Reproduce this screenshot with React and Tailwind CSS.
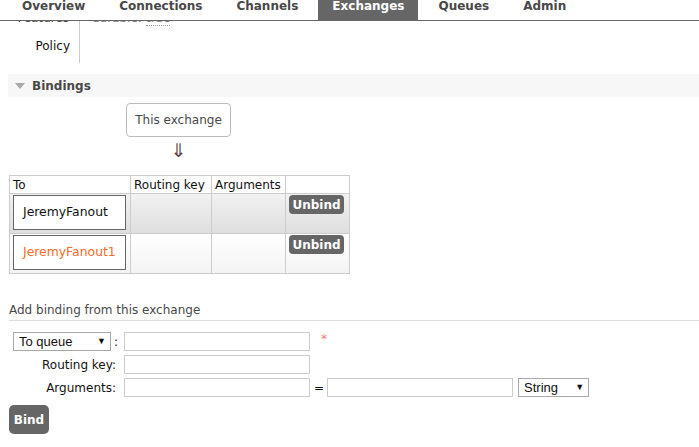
const TABS = ["Overview", "Connections", "Channels", "Exchanges", "Queues", "Admin"];

const BINDINGS = [
  { to: "JeremyFanout", row: "bg-gradient-to-b from-[#f2f2f2] to-[#dedede]", text: "text-[#111]" },
  { to: "JeremyFanout1", row: "bg-gradient-to-b from-white to-[#f3f3f3]", text: "text-[#f86b2a]" },
];

function FakeSelect({ label, className }) {
  return (
    <div
      className={`h-[19px] flex items-center justify-between border border-[#a9a9a9] bg-white pl-[5px] pr-[4px] font-['Liberation_Sans',Arial,sans-serif] text-[13px] text-[#111] ${className}`}
    >
      <span>{label}</span>
      <span className="text-[9px] leading-none text-[#111]">▼</span>
    </div>
  );
}

function Field({ className = "w-[186px]" }) {
  return <div className={`h-[19px] border border-[#ccc] bg-white ${className}`} />;
}

export default function App() {
  return (
    <div className="w-[699px] h-[447px] overflow-hidden bg-white font-['DejaVu_Sans',Verdana,sans-serif] text-[12px] text-[#484848]">
      {/* Top tabs, scrolled so the text is clipped */}
      <header className="h-[21px] border-b border-[#666] flex items-start gap-[6px] pl-[8px] overflow-hidden">
        {TABS.map((t) => (
          <div
            key={t}
            className={`px-[14px] font-bold text-[12px] leading-[14px] ${
              t === "Exchanges" ? "bg-[#666] text-white h-[20px]" : "text-[#484848] h-[20px]"
            }`}
          >
            <div className="-mt-[1px]">{t}</div>
          </div>
        ))}
      </header>

      {/* Exchange details, partly scrolled out of view */}
      <div className="h-[42px] overflow-hidden">
        <div className="-mt-[17px] grid grid-cols-[80px_1fr]">
          <div className="h-[28px] leading-[28px] text-right pr-[10px] border-r border-[#ccc]">Features</div>
          <div className="h-[28px] leading-[28px] pl-[12px] text-[#777]">
            durable: <span className="border-b border-dotted border-[#999]">true</span>
          </div>
          <div className="h-[31px] leading-[28px] text-right pr-[9px] border-r border-[#ccc] text-[#111]">Policy</div>
          <div className="h-[31px]" />
        </div>
      </div>

      {/* Bindings section */}
      <div className="ml-[8px] mt-[11px] h-[23px] bg-[#f7f7f7] flex items-center pl-[7px]">
        <span className="w-0 h-0 border-l-[5px] border-r-[5px] border-t-[6px] border-l-transparent border-r-transparent border-t-[#aaa]" />
        <span className="ml-[7px] font-bold text-[12px] text-[#484848]">Bindings</span>
      </div>

      <div className="pl-[9px]">
        <div className="ml-[117px] mt-[6px] w-[105px] h-[34px] border border-[#bbb] rounded-[4px] flex items-center justify-center text-[#484848]">
          This exchange
        </div>
        <div className="ml-[117px] w-[105px] text-center text-[19px] leading-[20px] mt-[3px] text-[#5a4040]">⇓</div>

        <table className="mt-[15px] border-collapse text-[#111]">
          <thead>
            <tr className="h-[18px]">
              <th className="w-[121px] border border-[#ccc] font-normal text-left px-[3px] py-0 leading-[16px]">To</th>
              <th className="w-[81px] border border-[#ccc] font-normal text-left px-[3px] leading-[16px]">Routing key</th>
              <th className="w-[74px] border border-[#ccc] font-normal text-left px-[3px] leading-[16px]">Arguments</th>
              <th className="w-[64px] border border-[#ccc]" />
            </tr>
          </thead>
          <tbody>
            {BINDINGS.map((b) => (
              <tr key={b.to} className={`h-[40px] ${b.row}`}>
                <td className="border border-[#ccc] p-0 align-top">
                  <div className={`ml-[3px] mt-[1px] w-[113px] h-[35px] border border-[#666] bg-white flex items-center pl-[9px] text-[12.4px] ${b.text}`}>
                    {b.to}
                  </div>
                </td>
                <td className="border border-[#ccc]" />
                <td className="border border-[#ccc]" />
                <td className="border border-[#ccc] p-0 align-top">
                  <div className="ml-[3px] mt-[1px] w-[55px] h-[19px] rounded-[4px] bg-[#666] text-white font-bold flex items-center justify-center">
                    Unbind
                  </div>
                </td>
              </tr>
            ))}
          </tbody>
        </table>

        <div className="mt-[27px] pb-[1px] border-b border-[#ddd] text-[12px] text-[#484848]">Add binding from this exchange</div>

        <div className="mt-[11px] flex flex-col gap-[4px] text-[#111]">
          <div className="flex items-center">
            <div className="w-[111px] flex items-center pl-[4px]">
              <FakeSelect label="To queue" className="w-[98px]" />
              <span className="ml-[3px]">:</span>
            </div>
            <div className="ml-[4px]">
              <Field />
            </div>
            <span className="ml-[11px] -mt-[6px] text-[#f77] text-[12px]">*</span>
          </div>
          <div className="flex items-center">
            <div className="w-[111px] text-right pr-[4px]">Routing key:</div>
            <div className="ml-[4px]">
              <Field />
            </div>
          </div>
          <div className="flex items-center">
            <div className="w-[111px] text-right pr-[4px]">Arguments:</div>
            <div className="ml-[4px]">
              <Field />
            </div>
            <span className="ml-[4px] mr-[3px]">=</span>
            <Field />
            <FakeSelect label="String" className="ml-[5px] w-[71px]" />
          </div>
        </div>

        <div className="mt-[8px] w-[40px] h-[29px] rounded-[5px] bg-[#666] text-white font-bold flex items-center justify-center">Bind</div>
      </div>
    </div>
  );
}
